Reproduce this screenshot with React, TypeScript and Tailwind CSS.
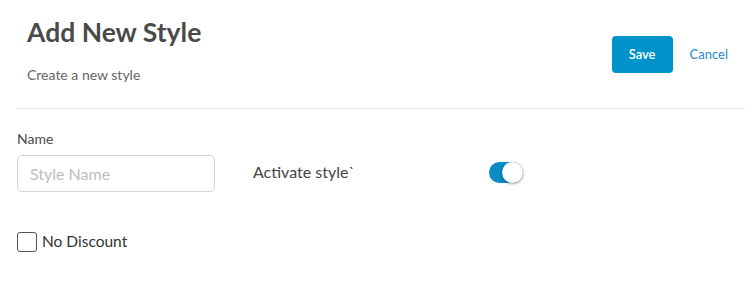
import { useState } from "react";

const App = () => {
  const [active, setActive] = useState(true);
  const [noDiscount, setNoDiscount] = useState(false);

  return (
    <div className="w-[756px] h-[283px] bg-white" style={{ fontFamily: "Lato, 'Open Sans', sans-serif" }}>
      <div className="flex items-start justify-between pl-[27px] pr-[28px] pt-[16px] h-[108px]">
        <div>
          <h1 className="text-[26.5px] leading-[32px] font-bold text-[#4a4a4a]">Add New Style</h1>
          <p className="mt-[19px] text-[14px] leading-[16px] text-[#666]">Create a new style</p>
        </div>
        <div className="flex items-center gap-[17px] mt-[20px]">
          <button className="w-[61px] h-[37px] rounded-[4px] bg-[#0092ca] text-white text-[13px] font-semibold">Save</button>
          <button className="text-[13px] text-[#2a8bc6]">Cancel</button>
        </div>
      </div>
      <div className="ml-[17px] mr-[11px] h-px bg-[#e3e3e3]" />

      <div className="pl-[17px] pt-[22px]">
        <label className="block text-[14px] leading-[16px] text-[#4a4a4a]">Name</label>
        <div className="flex items-center mt-[8px]">
          <input
            placeholder="Style Name"
            className="w-[198px] h-[37px] rounded-[5px] border border-[#d2d2d2] px-[12px] text-[16px] text-[#333] placeholder:text-[#bdbdbd] outline-none"
          />
          <span className="ml-[38px] w-[236px] text-[16px] text-[#444] -mt-[3px]">Activate style`</span>
          <button
            onClick={() => setActive(!active)}
            className={`-mt-[3px] w-[34px] h-[21px] rounded-full relative ${active ? "bg-[#0a8cc6]" : "bg-[#ccc]"}`}
          >
            <span
              className={`absolute top-0 w-[21px] h-[21px] rounded-full bg-white shadow-[0_1px_3px_rgba(0,0,0,0.4)] ${active ? "right-0" : "left-0"}`}
            />
          </button>
        </div>
        <label className="flex items-center mt-[38px] gap-[5px] cursor-pointer">
          <span
            onClick={() => setNoDiscount(!noDiscount)}
            className="w-[20px] h-[20px] rounded-[3px] border border-[#555] bg-white"
          />
          <span className="text-[15.5px] text-[#333]">No Discount</span>
        </label>
      </div>
    </div>
  );
};

export default App;
